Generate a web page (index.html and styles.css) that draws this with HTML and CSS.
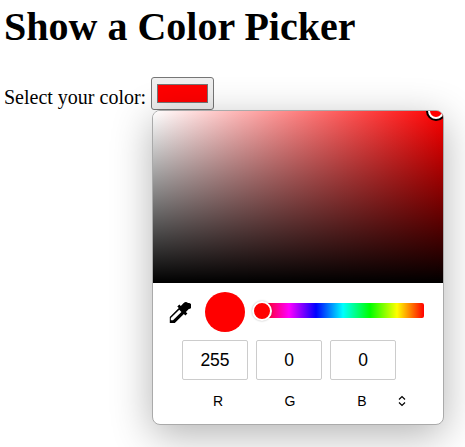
FILE: index.html
```html
<!DOCTYPE html>
<html lang="en">
<head>
    <meta charset="UTF-8">
    <title>Show a Color Picker</title>
    <link rel="stylesheet" href="styles.css">
</head>
<body>
    <h1>Show a Color Picker</h1>
    <div class="field">
        <label>Select your color:</label>
        <span class="color-btn"><span class="color-fill"></span></span>
    </div>

    <div class="picker">
        <div class="sat-box">
            <div class="sat-handle"></div>
        </div>
        <div class="controls">
            <svg class="dropper" width="24" height="24" viewBox="0 0 24 24">
                <path d="M21 3a3 3 0 0 0-4.300 0l-2.900 2.900-1.500-1.500-2 2 1.500 1.500-9 9.100V23h5l9.100-9 1.500 1.500 2-2-1.500-1.500 2.900-2.900A3 3 0 0 0 21 3z" fill="#000"/>
                <path d="M12.300 9.800l2.100 2.100-8.400 8.300H3.800V18z" fill="#fff"/>
            </svg>
            <div class="swatch"></div>
            <div class="hue-bar">
                <div class="hue-handle"></div>
            </div>
        </div>
        <div class="inputs">
            <div class="value">255</div>
            <div class="value">0</div>
            <div class="value">0</div>
        </div>
        <div class="labels">
            <span class="label">R</span>
            <span class="label">G</span>
            <span class="label">B</span>
            <svg class="toggle" width="10" height="12" viewBox="0 0 10 12">
                <path d="M2 4.500L5 1.500L8 4.500M2 7.500L5 10.500L8 7.500" fill="none" stroke="#000" stroke-width="1.200"/>
            </svg>
        </div>
    </div>
</body>
</html>
```

FILE: styles.css
```css
body {
    margin: 0;
    padding: 0 4px;
    font-family: "Liberation Serif", serif;
    font-size: 20px;
    color: #000;
    background-color: #fff;
}
h1 {
    font-size: 40px;
    line-height: 46px;
    margin: 4px 0 27px 0;
}
.field {
    display: flex;
    align-items: flex-end;
    gap: 5px;
    height: 33px;
}
.field label {
    margin-bottom: 1px;
}
.color-btn {
    box-sizing: border-box;
    width: 63px;
    height: 33px;
    display: flex;
    padding: 6px 5px;
    background-color: #efefef;
    border: 1px solid #767676;
    border-radius: 3px;
}
.color-fill {
    flex: 1;
    background-color: #f00;
    border: 1px solid #767676;
}
.picker {
    position: absolute;
    left: 152px;
    top: 110px;
    box-sizing: border-box;
    width: 292px;
    height: 315px;
    background-color: #fff;
    border: 1px solid #aaa;
    border-radius: 8px;
    box-shadow: 0 10px 40px rgba(0,0,0,0.3);
    font-family: "Liberation Sans", Arial, sans-serif;
    font-size: 16px;
    overflow: hidden;
}
.sat-box {
    position: relative;
    height: 172px;
    background: linear-gradient(to bottom, transparent, #000), linear-gradient(to right, #fff, #f00);
}
.sat-handle {
    position: absolute;
    right: -1px;
    top: -8px;
    box-sizing: border-box;
    width: 16px;
    height: 16px;
    background-color: #f00;
    border: 2px solid #fff;
    border-radius: 50%;
    box-shadow: 0 0 0 2px #000;
}
.controls {
    display: flex;
    align-items: center;
    height: 58px;
    padding-left: 14px;
}
.dropper {
    width: 24px;
    height: 24px;
}
.swatch {
    width: 40px;
    height: 40px;
    margin-left: 14px;
    border-radius: 50%;
    background-color: #f00;
}
.hue-bar {
    position: relative;
    width: 162px;
    height: 15px;
    margin-left: 17px;
    margin-bottom: 3px;
    border-radius: 2px;
    background: linear-gradient(to right, #f00, #f0f, #00f, #0ff, #0f0, #ff0, #f00);
}
.hue-handle {
    position: absolute;
    left: -10px;
    top: -2px;
    box-sizing: border-box;
    width: 20px;
    height: 20px;
    background-color: #f00;
    border: 2px solid #fff;
    border-radius: 50%;
    box-shadow: 0 0 2px rgba(0,0,0,0.3);
}
.inputs {
    display: flex;
    gap: 8px;
    margin-top: -1px;
    padding-left: 29px;
}
.value {
    box-sizing: border-box;
    width: 66px;
    height: 40px;
    line-height: 38px;
    text-align: center;
    font-size: 17.5px;
    color: #000;
    border: 1px solid #ccc;
    border-radius: 2px;
}
.labels {
    display: flex;
    align-items: center;
    gap: 8px;
    margin-top: 13px;
    padding-left: 33px;
    font-size: 14px;
    color: #000;
}
.label {
    width: 64px;
    text-align: center;
}
.toggle {
    margin-left: -5px;
}
```
